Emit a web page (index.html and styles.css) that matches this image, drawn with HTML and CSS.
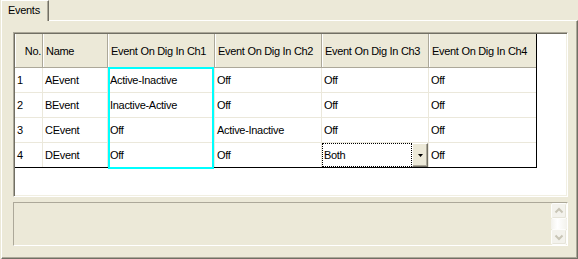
FILE: index.html
```html
<!DOCTYPE html>
<html>
<head>
<meta charset="utf-8">
<link rel="stylesheet" href="styles.css">
</head>
<body>
<div class="tabs"><div class="tab">Events</div></div>
<div class="page">
  <div class="grid">
    <div class="table">
      <div class="row head">
        <div class="c num">No.</div>
        <div class="c">Name</div>
        <div class="c">Event On Dig In Ch1</div>
        <div class="c">Event On Dig In Ch2</div>
        <div class="c">Event On Dig In Ch3</div>
        <div class="c last">Event On Dig In Ch4</div>
      </div>
      <div class="row">
        <div class="c">1</div><div class="c">AEvent</div><div class="c">Active-Inactive</div><div class="c">Off</div><div class="c">Off</div><div class="c last">Off</div>
      </div>
      <div class="row">
        <div class="c">2</div><div class="c">BEvent</div><div class="c">Inactive-Active</div><div class="c">Off</div><div class="c">Off</div><div class="c last">Off</div>
      </div>
      <div class="row">
        <div class="c">3</div><div class="c">CEvent</div><div class="c">Off</div><div class="c">Active-Inactive</div><div class="c">Off</div><div class="c last">Off</div>
      </div>
      <div class="row final">
        <div class="c">4</div><div class="c">DEvent</div><div class="c">Off</div><div class="c">Off</div>
        <div class="c combo-cell">
          <div class="combo">
            <div class="combo-text">Both</div>
            <div class="combo-btn"><svg width="5" height="3" viewBox="0 0 5 3"><path d="M0 0h5L2.5 3z" fill="#000"/></svg></div>
          </div>
        </div>
        <div class="c last">Off</div>
      </div>
      <div class="sel"></div>
    </div>
  </div>
  <div class="notes">
    <div class="scroll">
      <div class="sbtn"><svg width="14" height="14" viewBox="0 0 14 14"><path d="M3.5 8.5L7 5l3.5 3.5" fill="none" stroke="#c8c5b6" stroke-width="2"/></svg></div>
      <div class="track"></div>
      <div class="sbtn"><svg width="14" height="14" viewBox="0 0 14 14"><path d="M3.5 5.5L7 9l3.5-3.5" fill="none" stroke="#c8c5b6" stroke-width="2"/></svg></div>
    </div>
  </div>
</div>
</body>
</html>
```
FILE: styles.css
```css
* { box-sizing: border-box; }
html, body { margin: 0; padding: 0; }
body {
  width: 578px;
  height: 259px;
  overflow: hidden;
  background: #ece9d8;
  font-family: "Liberation Sans", Arial, sans-serif;
  font-size: 11px;
  letter-spacing: -0.3px;
  color: #000;
}
.tabs {
  display: flex;
  height: 20px;
  padding-left: 1px;
}
.tab {
  position: relative;
  z-index: 1;
  width: 48px;
  height: 21px;
  margin-bottom: -1px;
  padding: 2px 0 0 6px;
  line-height: 14px;
  background: #ece9d8;
  border-left: 1px solid #fff;
  border-top: 1px solid #fff;
  border-right: 1px solid #716f64;
  box-shadow: inset -1px 0 #aca899;
}
.page {
  margin-left: 1px;
  height: 239px;
  border-top: 1px solid #fff;
  border-left: 1px solid #fff;
  border-right: 1px solid #716f64;
  border-bottom: 1px solid #716f64;
  box-shadow: inset -1px -1px #aca899;
  padding: 11px 9px 0 11px;
}
.grid {
  height: 165px;
  background: #fff;
  border: 1px solid;
  border-color: #aca899 #fff #fff #aca899;
  box-shadow: inset 1px 1px #716f64, inset -1px -1px #f1efe2;
  padding: 1px 0 0 1px;
}
.table {
  position: relative;
  width: 522px;
  border-right: 1px solid #000;
  border-bottom: 1px solid #000;
}
.row {
  display: grid;
  grid-template-columns: 28px 65px 107px 107px 107px 107px;
  height: 25px;
  border-bottom: 1px solid #ebe8db;
}
.row.final { height: 24px; border-bottom: none; }
.row.head {
  height: 34px;
  background: #ece9d8;
  border-bottom: 1px solid #aca899;
}
.c {
  line-height: 24px;
  padding-left: 2px;
  white-space: nowrap;
  overflow: hidden;
  border-right: 1px solid #ebe8db;
}
.c.last { border-right: none; }
.head .c {
  line-height: 33px;
  padding-top: 1px;
  padding-left: 3px;
  border-right: 1px solid #aca899;
  box-shadow: inset 1px 0 #fff;
}
.head .c.last { border-right: none; }
.head .c.num { text-align: right; padding-right: 1px; }
.combo-cell { padding: 0; }
.combo {
  display: flex;
  height: 24px;
}
.combo-text {
  width: 90px;
  border: 1px dotted #000;
  line-height: 22px;
  padding-left: 1px;
}
.combo-btn {
  width: 16px;
  display: flex;
  align-items: center;
  justify-content: center;
  background: #ece9d8;
  border: 1px solid;
  border-color: #fff #716f64 #716f64 #fff;
  box-shadow: inset -1px -1px #aca899;
}
.sel {
  position: absolute;
  left: 93px;
  top: 33px;
  width: 106px;
  height: 102px;
  border: 2px solid #00ffff;
}
.notes {
  margin-top: 5px;
  height: 44px;
  border: 1px solid;
  border-color: #aca899 #fff #fff #aca899;
  display: flex;
  justify-content: flex-end;
}
.scroll {
  width: 16px;
  display: flex;
  flex-direction: column;
}
.sbtn {
  height: 16px;
  display: flex;
  align-items: center;
  justify-content: center;
  background: #f3f2ec;
  border: 1px solid #fdfdfb;
  border-radius: 2px;
  box-shadow: inset -1px -1px #e6e4d9;
}
.track {
  flex: 1;
  background: linear-gradient(to right, #f3f2ec, #ffffff 40%, #f3f2ec);
}
```
